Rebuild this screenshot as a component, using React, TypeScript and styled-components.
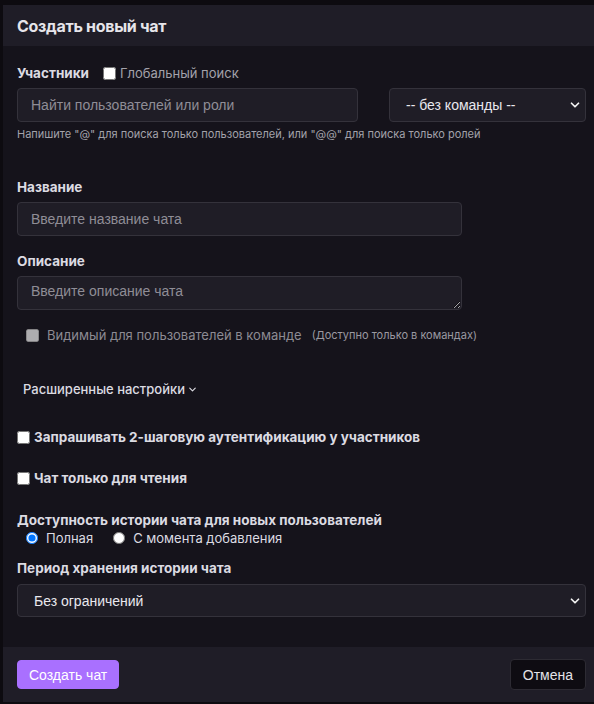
import React from 'react'
import styled, { createGlobalStyle } from 'styled-components'
import { ChevronDown } from 'lucide-react'

const GlobalStyle = createGlobalStyle`
  html, body {
    margin: 0;
    padding: 0;
    background: #0d0b10;
    overflow: hidden;
  }
  * {
    box-sizing: border-box;
  }
`

const colors = {
  header: '#1f1d27',
  body: '#15131b',
  field: '#1f1d26',
  border: '#34323b',
  text: '#e9e8ee',
  label: '#dcdbe2',
  muted: '#a3a2aa',
  placeholder: '#8f8d96',
  purple: '#a970ff',
}

const Modal = styled.div`
  margin: 5px 0 0 3px;
  width: 591px;
  height: 697px;
  display: flex;
  flex-direction: column;
  background: ${colors.body};
  font-family: Inter, 'Noto Sans', sans-serif;
  color: ${colors.text};
`

const Header = styled.div`
  height: 41px;
  display: flex;
  align-items: center;
  padding: 0 14px;
  background: ${colors.header};
  font-size: 16px;
  font-weight: 700;
  letter-spacing: -0.3px;
  color: #e6e5ea;
`

const Body = styled.div`
  flex: 1;
  padding: 18px 8px 0 14px;
`

const Label = styled.div<{ $mt?: number }>`
  display: flex;
  align-items: center;
  height: 18px;
  margin-top: ${p => p.$mt ?? 0}px;
  font-size: 13.5px;
  font-weight: 700;
  color: ${colors.label};
`

const InlineCheck = styled.label`
  display: flex;
  align-items: center;
  margin-left: 14px;
  font-size: 13px;
  font-weight: 400;
  color: ${colors.muted};

  input {
    margin: 0 4px 0 0;
    width: 13px;
    height: 13px;
  }
`

const Row = styled.div<{ $mt?: number }>`
  display: flex;
  align-items: center;
  margin-top: ${p => p.$mt ?? 0}px;
`

const TextInput = styled.input<{ $w: number }>`
  width: ${p => p.$w}px;
  height: 34px;
  padding: 0 13px;
  background: ${colors.field};
  border: 1px solid ${colors.border};
  border-radius: 4px;
  font-family: 'Liberation Sans', Arial, sans-serif;
  font-size: 14px;
  color: ${colors.text};
  outline: none;

  &::placeholder {
    color: ${colors.placeholder};
  }
`

const TextArea = styled.textarea`
  display: block;
  width: 445px;
  height: 34px;
  padding: 6px 13px 0;
  background: ${colors.field};
  border: 1px solid ${colors.border};
  border-radius: 4px;
  font-family: 'Liberation Sans', Arial, sans-serif;
  font-size: 14px;
  color: ${colors.text};
  outline: none;
  resize: vertical;

  &::placeholder {
    color: ${colors.placeholder};
  }
`

const SelectWrap = styled.div<{ $w: number; $ml?: number; $mt?: number }>`
  position: relative;
  width: ${p => p.$w}px;
  margin-left: ${p => p.$ml ?? 0}px;
  margin-top: ${p => p.$mt ?? 0}px;

  svg {
    position: absolute;
    right: 4px;
    top: 50%;
    transform: translateY(-50%);
    pointer-events: none;
    color: #f2f2f2;
  }
`

const Select = styled.select<{ $h: number }>`
  appearance: none;
  width: 100%;
  height: ${p => p.$h}px;
  padding: 0 24px 0 16px;
  background: ${colors.field};
  border: 1px solid ${colors.border};
  border-radius: 4px;
  font-family: 'Liberation Sans', Arial, sans-serif;
  font-size: 14px;
  color: ${colors.text};
  outline: none;
`

const Hint = styled.div`
  margin-top: 5px;
  font-size: 11px;
  color: ${colors.muted};
`

const CheckLine = styled.label<{ $mt?: number; $indent?: number; $bold?: boolean; $dim?: boolean }>`
  display: flex;
  align-items: center;
  height: 18px;
  margin-top: ${p => p.$mt ?? 0}px;
  padding-left: ${p => p.$indent ?? 0}px;
  font-size: ${p => (p.$bold ? 13.5 : 13)}px;
  font-weight: ${p => (p.$bold ? 700 : 400)};
  color: ${p => (p.$dim ? '#8d8b93' : colors.label)};

  input {
    margin: 0 ${p => (p.$dim ? 8 : 4)}px 0 0;
    width: 13px;
    height: 13px;
  }
`

const Note = styled.span`
  margin-left: 10px;
  font-size: 11px;
  color: #9a99a1;
`

const Toggle = styled.div<{ $mt?: number }>`
  display: flex;
  align-items: center;
  gap: 2px;
  height: 18px;
  margin-top: ${p => p.$mt ?? 0}px;
  padding-left: 6px;
  font-size: 13px;
  font-weight: 500;
  color: ${colors.label};
`

const RadioGroup = styled.div`
  display: flex;
  align-items: center;
  gap: 20px;
  height: 18px;
  padding-left: 9px;
`

const Radio = styled.label`
  display: flex;
  align-items: center;
  font-size: 13px;
  color: ${colors.label};

  input {
    margin: 0 8px 0 0;
    width: 12px;
    height: 12px;
  }
`

const Footer = styled.div`
  height: 55px;
  display: flex;
  align-items: center;
  justify-content: space-between;
  padding: 0 8px 0 14px;
  background: ${colors.header};
`

const Button = styled.button<{ $primary?: boolean }>`
  height: ${p => (p.$primary ? 29 : 31)}px;
  padding: 0 ${p => (p.$primary ? 11 : 12)}px;
  border-radius: 4px;
  border: 1px solid ${p => (p.$primary ? colors.purple : '#2d2b33')};
  background: ${p => (p.$primary ? colors.purple : '#0e0c12')};
  color: ${p => (p.$primary ? '#ffffff' : '#e4e3e8')};
  font-family: 'Liberation Sans', Arial, sans-serif;
  font-size: 14px;
  cursor: pointer;
`

export default function App() {
  return (
    <>
      <GlobalStyle />
      <Modal>
        <Header>Создать новый чат</Header>
        <Body>
          <Label>
            Участники
            <InlineCheck>
              <input type="checkbox" />
              Глобальный поиск
            </InlineCheck>
          </Label>
          <Row $mt={6}>
            <TextInput $w={341} placeholder="Найти пользователей или роли" />
            <SelectWrap $w={197} $ml={31}>
              <Select $h={34} defaultValue="none">
                <option value="none">-- без команды --</option>
              </Select>
              <ChevronDown size={14} strokeWidth={3} />
            </SelectWrap>
          </Row>
          <Hint>Напишите "@" для поиска только пользователей, или "@@" для поиска только ролей</Hint>

          <Label $mt={37}>Название</Label>
          <Row $mt={6}>
            <TextInput $w={445} placeholder="Введите название чата" />
          </Row>

          <Label $mt={16}>Описание</Label>
          <Row $mt={6}>
            <TextArea placeholder="Введите описание чата" />
          </Row>

          <CheckLine $mt={16} $indent={9} $dim>
            <input type="checkbox" disabled />
            Видимый для пользователей в команде
            <Note>(Доступно только в командах)</Note>
          </CheckLine>

          <Toggle $mt={36}>
            Расширенные настройки
            <ChevronDown size={11} strokeWidth={2.5} />
          </Toggle>

          <CheckLine $mt={30} $bold>
            <input type="checkbox" />
            Запрашивать 2-шаговую аутентификацию у участников
          </CheckLine>

          <CheckLine $mt={23} $bold>
            <input type="checkbox" />
            Чат только для чтения
          </CheckLine>

          <Label $mt={24}>Доступность истории чата для новых пользователей</Label>
          <RadioGroup>
            <Radio>
              <input type="radio" name="history" defaultChecked />
              Полная
            </Radio>
            <Radio>
              <input type="radio" name="history" />
              С момента добавления
            </Radio>
          </RadioGroup>

          <Label $mt={12}>Период хранения истории чата</Label>
          <SelectWrap $w={569} $mt={7}>
            <Select $h={33} defaultValue="unlimited">
              <option value="unlimited">Без ограничений</option>
            </Select>
            <ChevronDown size={14} strokeWidth={3} />
          </SelectWrap>
        </Body>
        <Footer>
          <Button $primary>Создать чат</Button>
          <Button>Отмена</Button>
        </Footer>
      </Modal>
    </>
  )
}
